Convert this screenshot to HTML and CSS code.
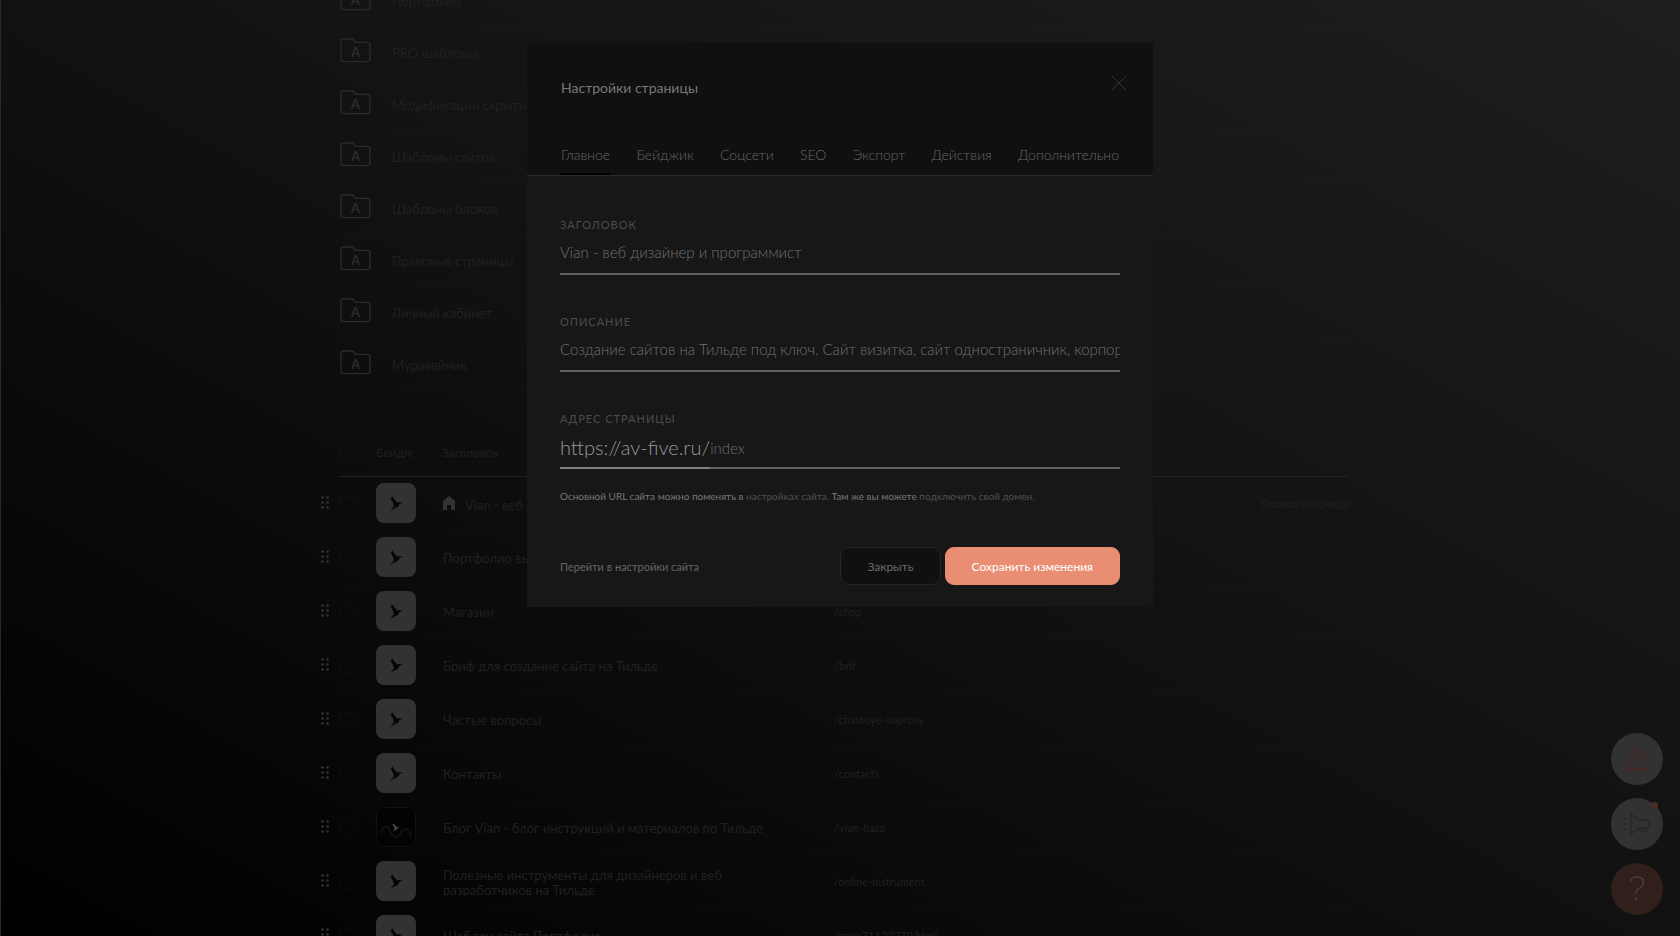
FILE: index.html
```html
<!DOCTYPE html>
<html lang="ru">
<head>
    <meta charset="UTF-8">
    <meta name="viewport" content="width=device-width, initial-scale=1.0">
    <title>Настройки страницы</title>
    <link rel="stylesheet" href="styles.css">
</head>
<body>

<svg class="sprite" aria-hidden="true">
    <symbol id="folder" viewBox="0 0 32 26">
        <path d="M1 23V3q0-2 2-2h10q1.500 0 1.500 1.500T16 4.500h13q2 0 2 2V23q0 1.500-1.500 1.500h-27Q1 24.500 1 23z" fill="none" stroke="currentColor" stroke-width="1.400"/>
    </symbol>
    <symbol id="bird" viewBox="0 0 36 42">
        <path d="M1 6l3 1 1-7 7 9 8 10 6-2 10 1-9 4-5 8-9 4L0 42l11-13-3-10z"/>
    </symbol>
    <symbol id="dots" viewBox="0 0 8 13">
        <g fill="currentColor"><circle cx="1.500" cy="1.500" r="1.300"/><circle cx="6.500" cy="1.500" r="1.300"/><circle cx="1.500" cy="6.500" r="1.300"/><circle cx="6.500" cy="6.500" r="1.300"/><circle cx="1.500" cy="11.500" r="1.300"/><circle cx="6.500" cy="11.500" r="1.300"/></g>
    </symbol>
</svg>

<main class="page">
    <ul class="folders">
        <li><a href="#"><span class="folder"><svg><use href="#folder"/></svg>A</span>Портфолио</a></li>
        <li><a href="#"><span class="folder"><svg><use href="#folder"/></svg>A</span>PRO шаблоны</a></li>
        <li><a href="#"><span class="folder"><svg><use href="#folder"/></svg>A</span>Модификации скрытые</a></li>
        <li><a href="#"><span class="folder"><svg><use href="#folder"/></svg>A</span>Шаблоны сайтов</a></li>
        <li><a href="#"><span class="folder"><svg><use href="#folder"/></svg>A</span>Шаблоны блоков</a></li>
        <li><a href="#"><span class="folder"><svg><use href="#folder"/></svg>A</span>Правовые страницы</a></li>
        <li><a href="#"><span class="folder"><svg><use href="#folder"/></svg>A</span>Личный кабинет</a></li>
        <li><a href="#"><span class="folder"><svg><use href="#folder"/></svg>A</span>Муравейник</a></li>
    </ul>

    <table class="pages">
        <thead>
            <tr>
                <th class="check"><input type="checkbox" aria-label="Выбрать все"></th>
                <th class="badge">Бейдж</th>
                <th class="name">Заголовок</th>
                <th class="url"></th>
                <th class="note"></th>
            </tr>
        </thead>
        <tbody>
            <tr>
                <td><svg class="drag"><use href="#dots"/></svg><input type="checkbox" aria-label="Выбрать"></td>
                <td><span class="thumb"><svg><use href="#bird"/></svg></span></td>
                <td class="name"><svg class="home" viewBox="0 0 12 14"><path d="M6 0l6 5v9H8V9H4v5H0V5z" fill="currentColor"/></svg>Vian - веб</td>
                <td></td>
                <td class="note">Главная страница</td>
            </tr>
            <tr>
                <td><svg class="drag"><use href="#dots"/></svg><input type="checkbox" aria-label="Выбрать"></td>
                <td><span class="thumb"><svg><use href="#bird"/></svg></span></td>
                <td class="name">Портфолио вы</td>
                <td></td>
                <td></td>
            </tr>
            <tr>
                <td><svg class="drag"><use href="#dots"/></svg><input type="checkbox" aria-label="Выбрать"></td>
                <td><span class="thumb"><svg><use href="#bird"/></svg></span></td>
                <td class="name">Магазин</td>
                <td class="url">/shop</td>
                <td></td>
            </tr>
            <tr>
                <td><svg class="drag"><use href="#dots"/></svg><input type="checkbox" aria-label="Выбрать"></td>
                <td><span class="thumb"><svg><use href="#bird"/></svg></span></td>
                <td class="name">Бриф для создание сайта на Тильде</td>
                <td class="url">/brif</td>
                <td></td>
            </tr>
            <tr>
                <td><svg class="drag"><use href="#dots"/></svg><input type="checkbox" aria-label="Выбрать"></td>
                <td><span class="thumb"><svg><use href="#bird"/></svg></span></td>
                <td class="name">Частые вопросы</td>
                <td class="url">/chastuye-voprosy</td>
                <td></td>
            </tr>
            <tr>
                <td><svg class="drag"><use href="#dots"/></svg><input type="checkbox" aria-label="Выбрать"></td>
                <td><span class="thumb"><svg><use href="#bird"/></svg></span></td>
                <td class="name">Контакты</td>
                <td class="url">/contacts</td>
                <td></td>
            </tr>
            <tr>
                <td><svg class="drag"><use href="#dots"/></svg><input type="checkbox" aria-label="Выбрать"></td>
                <td><span class="thumb thumb-dark"><svg class="wave" viewBox="0 0 40 40"><path d="M4 27c3-10 7-10 10-2s8 7 11 1 8-5 11 4" fill="none" stroke="currentColor" stroke-width="2"/></svg><svg><use href="#bird"/></svg></span></td>
                <td class="name">Блог Vian - блог инструкций и материалов по Тильде</td>
                <td class="url">/vian-baza</td>
                <td></td>
            </tr>
            <tr>
                <td><svg class="drag"><use href="#dots"/></svg><input type="checkbox" aria-label="Выбрать"></td>
                <td><span class="thumb"><svg><use href="#bird"/></svg></span></td>
                <td class="name">Полезные инструменты для дизайнеров и веб<br>разработчиков на Тильде</td>
                <td class="url">/online-instrument</td>
                <td></td>
            </tr>
            <tr>
                <td><svg class="drag"><use href="#dots"/></svg><input type="checkbox" aria-label="Выбрать"></td>
                <td><span class="thumb"><svg><use href="#bird"/></svg></span></td>
                <td class="name">Шаблон сайта Портфолио</td>
                <td class="url">/page71122279.html</td>
                <td></td>
            </tr>
        </tbody>
    </table>
</main>

<div class="fabs">
    <button type="button" class="fab fab-warning" aria-label="Предупреждения">
        <svg width="26" height="23" viewBox="0 0 26 23" fill="none" stroke="currentColor" stroke-width="1.300"><path d="M11 2.500q2-2.500 4 0l9.500 16q1 3-2 3h-19q-3 0-2-3zM13 7v8M13 17v1.500"/></svg>
    </button>
    <button type="button" class="fab fab-news" aria-label="Новости">
        <svg width="28" height="22" viewBox="0 0 28 22" fill="none" stroke="currentColor" stroke-width="1.300"><path d="M8 1v20l8-6h10V7H16zM16 15q1 4 4.500 4t4-4M1 5l2 1.500M0 11h3M1 17l2-1.500"/></svg>
        <span class="dot"></span>
    </button>
    <button type="button" class="fab fab-help" aria-label="Помощь">
        <svg width="16" height="26" viewBox="0 0 16 26" fill="none" stroke="currentColor" stroke-width="1.400"><path d="M1.500 6q0-5 6.500-5t6.500 5.500q0 3-4 5.500t-3.500 6M7 21.500v3"/></svg>
    </button>
</div>

<div class="overlay">
    <form class="modal" role="dialog" aria-labelledby="modal-title">
        <header class="modal-head">
            <div class="modal-top">
                <h1 id="modal-title">Настройки страницы</h1>
                <button type="button" class="close" aria-label="Закрыть окно">
                    <svg width="14" height="14" viewBox="0 0 14 14"><path d="M0 0l14 14M14 0L0 14" stroke="currentColor"/></svg>
                </button>
            </div>
            <nav class="tabs">
                <a href="#" class="active">Главное</a>
                <a href="#">Бейджик</a>
                <a href="#">Соцсети</a>
                <a href="#">SEO</a>
                <a href="#">Экспорт</a>
                <a href="#">Действия</a>
                <a href="#">Дополнительно</a>
            </nav>
        </header>
        <div class="modal-body">
            <div class="field">
                <label for="title">ЗАГОЛОВОК</label>
                <input type="text" id="title" value="Vian - веб дизайнер и программист">
            </div>
            <div class="field">
                <label for="descr">ОПИСАНИЕ</label>
                <input type="text" id="descr" value="Создание сайтов на Тильде под ключ. Сайт визитка, сайт одностраничник, корпоративный сайт">
            </div>
            <div class="field">
                <label for="alias">АДРЕС СТРАНИЦЫ</label>
                <div class="address">
                    <span>https://av-five.ru/</span>
                    <input type="text" id="alias" value="index">
                </div>
            </div>
            <p class="hint">Основной URL сайта можно поменять в <a href="#">настройках сайта.</a> Там же вы можете <a href="#">подключить свой домен.</a></p>
            <footer class="actions">
                <a href="#">Перейти в настройки сайта</a>
                <button type="button" class="btn">Закрыть</button>
                <button type="submit" class="btn btn-save">Сохранить изменения</button>
            </footer>
        </div>
    </form>
</div>

</body>
</html>
```
FILE: styles.css
```css
* {
    box-sizing: border-box;
}

body {
    margin: 0;
    height: 100vh;
    overflow: hidden;
    font-family: Lato, "Open Sans", sans-serif;
    font-size: 13px;
    font-weight: 400;
    color: #202020;
    background: linear-gradient(to top right, #000, #111 50%, #1e1e1e);
    border-left: 1px solid #2a2a2a;
}

a {
    color: inherit;
    text-decoration: none;
}

button,
input {
    font: inherit;
    margin: 0;
}

.sprite {
    position: absolute;
    width: 0;
    height: 0;
}

.page {
    max-width: 1017px;
    margin: -26px auto 0;
    padding-left: 8px;
}

/* folders */

.folders {
    list-style: none;
    margin: 0;
    padding: 0;
}

.folders a {
    display: flex;
    align-items: center;
    gap: 21px;
    height: 52px;
    padding-top: 2px;
    border-bottom: 1px solid rgba(255, 255, 255, 0.015);
}

.folder {
    position: relative;
    width: 31px;
    height: 25px;
    padding-top: 5px;
    margin-bottom: 4px;
    font-size: 13px;
    font-weight: 700;
    line-height: 18px;
    text-align: center;
    color: #2b2b2b;
}

.folder svg {
    position: absolute;
    inset: 0;
    width: 100%;
    height: 100%;
}

/* pages */

.pages {
    width: 100%;
    border-collapse: collapse;
    table-layout: fixed;
}

.pages th {
    height: 86px;
    padding: 40px 0 0;
    font-size: 12px;
    font-weight: 400;
    text-align: left;
    border-bottom: 1px solid #2a1f18;
}

.pages td {
    position: relative;
    height: 54px;
    padding: 0;
    line-height: 15px;
    border-bottom: 1px solid rgba(255, 255, 255, 0.015);
}

.pages .check {
    width: 36px;
}

.pages .badge {
    width: 66px;
}

.pages .name {
    width: 392px;
}

.pages td.name {
    padding: 3px 0 0 1px;
}

.pages .url {
    font-size: 11px;
}

.pages .note {
    font-size: 11px;
    text-align: right;
}

.pages input {
    appearance: none;
    display: block;
    width: 15px;
    height: 15px;
    border: 1px solid rgba(255, 255, 255, 0.025);
}

.drag {
    position: absolute;
    left: -19px;
    top: 19px;
    width: 8px;
    height: 13px;
    color: #333;
}

.thumb {
    position: relative;
    display: flex;
    align-items: center;
    justify-content: center;
    width: 40px;
    height: 40px;
    border-radius: 8px;
    background: #323232;
    color: #050505;
}

.thumb svg {
    width: 13px;
    height: 15px;
    fill: currentColor;
}

.thumb-dark {
    background: #030303;
    border: 1px solid #101010;
    color: #4a4a4a;
}

.thumb-dark svg {
    width: 8px;
    height: 9px;
}

.thumb-dark .wave {
    position: absolute;
    inset: 0;
    width: 100%;
    height: 100%;
    color: #12100b;
}

.home {
    width: 12px;
    height: 14px;
    margin-right: 10px;
    color: #333;
}

/* round buttons */

.fabs {
    position: fixed;
    right: 17px;
    bottom: 21px;
    display: flex;
    flex-direction: column;
    gap: 13px;
}

.fab {
    position: relative;
    display: flex;
    align-items: center;
    justify-content: center;
    width: 52px;
    height: 52px;
    padding: 0;
    border: 0;
    border-radius: 50%;
    background: #323232;
}

.fab-warning {
    color: #502a25;
}

.fab-news {
    color: #262626;
}

.fab-help {
    background: #311f1b;
    color: #484040;
}

.dot {
    position: absolute;
    top: 4px;
    right: 5px;
    width: 7px;
    height: 7px;
    border-radius: 50%;
    background: #4d2c25;
}

/* settings window */

.overlay {
    position: fixed;
    inset: 0;
    padding-top: 43px;
}

.modal {
    width: 626px;
    max-width: 100%;
    margin: 0 auto;
    background: #171717;
}

.modal-head {
    padding: 33px 34px 0;
    background: #101010;
    border-bottom: 1px solid #2c2c2c;
}

.modal-top {
    display: flex;
    align-items: flex-start;
    justify-content: space-between;
}

.modal-top h1 {
    margin: 2px 0 0;
    font-size: 14px;
    font-weight: 400;
    line-height: 20px;
    color: #777;
}

.close {
    display: flex;
    margin-right: -7px;
    padding: 0;
    border: 0;
    background: none;
    color: #333;
}

.tabs {
    display: flex;
    justify-content: space-between;
    margin-top: 47px;
    font-size: 14px;
    font-weight: 300;
    line-height: 20px;
    color: #666;
}

.tabs a {
    padding-bottom: 8px;
    border-bottom: 2px solid transparent;
}

.tabs .active {
    border-color: #000;
}

.modal-body {
    padding: 41px 33px 22px;
}

.field {
    margin-bottom: 39px;
}

.field label {
    display: block;
    font-size: 11px;
    line-height: 16px;
    letter-spacing: 1px;
    color: #4c4c4c;
}

.field input {
    display: block;
    width: 100%;
    height: 42px;
    padding: 0 0 2px;
    border: 0;
    border-bottom: 2px solid #606060;
    outline: 0;
    background: none;
    font-size: 15px;
    font-weight: 300;
    color: #707070;
}

.address {
    display: flex;
}

.address span {
    height: 42px;
    border-bottom: 2px solid #808080;
    font-size: 20px;
    font-weight: 300;
    line-height: 40px;
    color: #999;
}

.address input {
    flex: 1;
    padding: 2px 0 0;
}

.hint {
    margin: -22px 0 41px;
    font-size: 10px;
    line-height: 20px;
    color: #777;
}

.hint a {
    color: #505050;
}

.actions {
    display: flex;
    align-items: center;
    gap: 4px;
    color: #666;
}

.actions a {
    margin-right: auto;
    font-size: 11px;
}

.btn {
    height: 38px;
    padding: 0 26px;
    border: 1px solid #262626;
    border-radius: 9px;
    background: #101010;
    font-size: 12px;
    color: #6a6a6a;
}

.btn-save {
    border-color: #ea8e73;
    background: #ea8e73;
    color: #fff;
}
```
